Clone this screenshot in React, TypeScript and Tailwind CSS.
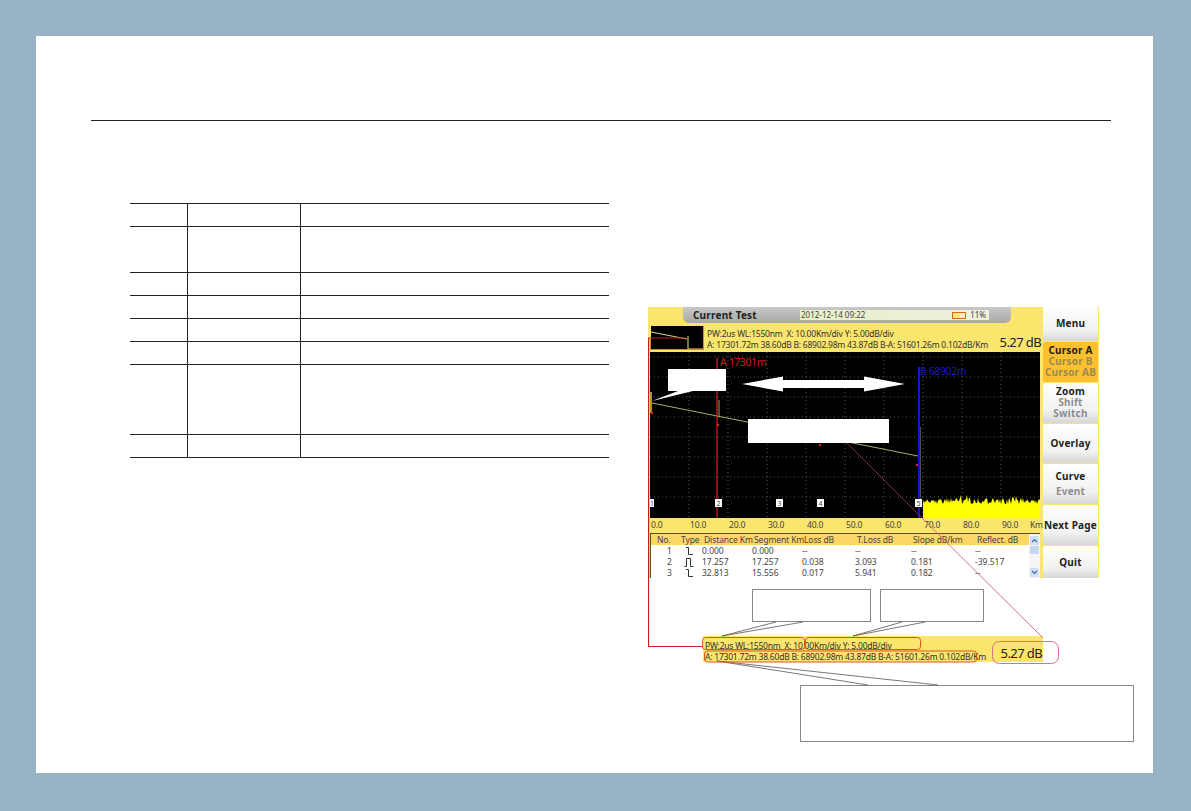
const FONT = "[font-family:'Noto_Sans','Open_Sans',sans-serif]";

const TABLE_ROWS = ['h-[23px]', 'h-[46px]', 'h-[23px]', 'h-[23px]', 'h-[23px]', 'h-[23px]', 'h-[70px]', 'h-[23px]'];

const AXIS = ['0.0', '10.0', '20.0', '30.0', '40.0', '50.0', '60.0', '70.0', '80.0', '90.0', 'Km'];

const EVENTS = [
    { no: '1', type: 'end', dist: '0.000', seg: '0.000', loss: '--', total: '--', slope: '--', refl: '--' },
    { no: '2', type: 'pulse', dist: '17.257', seg: '17.257', loss: '0.038', total: '3.093', slope: '0.181', refl: '-39.517' },
    { no: '3', type: 'end', dist: '32.813', seg: '15.556', loss: '0.017', total: '5.941', slope: '0.182', refl: '--' },
];

const MARKERS = [
    { label: '1', left: 'left-0', w: 'w-[4px]' },
    { label: '2', left: 'left-[65px]', w: 'w-[7px]' },
    { label: '3', left: 'left-[126px]', w: 'w-[7px]' },
    { label: '4', left: 'left-[167px]', w: 'w-[7px]' },
    { label: '5', left: 'left-[265px]', w: 'w-[7px]' },
];

// noise floor at the far end of the trace
function noisePath() {
    let d = 'M273 166 L273 148';
    let seed = 7;
    for (let x = 274; x <= 390; x += 1) {
        seed = (seed * 73 + 41) % 101;
        const y = 146 + (seed % 7) - (seed % 13 === 0 ? 3 : 0);
        d += ` L${x} ${y}`;
    }
    return d + ' L390 166 Z';
}

function TableGrid() {
    return (
        <div className="w-[479px] border-t border-[#222]">
            {TABLE_ROWS.map((height, i) => (
                <div
                    key={i}
                    className={`grid grid-cols-[58px_113px_1fr] border-b border-[#222] ${height}`}
                >
                    <div className="border-r border-[#222]" />
                    <div className="border-r border-[#222]" />
                    <div />
                </div>
            ))}
        </div>
    );
}

function TypeIcon({ type }: { type: string }) {
    return (
        <svg width="10" height="10" viewBox="0 0 10 10" fill="none" stroke="#333" strokeWidth="1">
            <path d={type === 'pulse' ? 'M0.5 9.5 H2.5 V1.5 H6.5 V9.5 H9.5' : 'M2 1.5 H4.5 V8.5 H9'} />
        </svg>
    );
}

function Plot() {
    const vertical = [39, 78, 117, 156, 195, 234, 273, 312, 351];
    const horizontal = [5, 25, 45, 65, 85, 105, 125, 145];
    return (
        <div className="relative ml-[2px] h-[166px] w-[390px] bg-black">
            <svg className="absolute inset-0" width="390" height="166" viewBox="0 0 390 166" fill="none">
                {vertical.map((x) => (
                    <path key={x} d={`M${x} 0 V166`} stroke="#5a5a5a" strokeDasharray="1 3" />
                ))}
                {horizontal.map((y) => (
                    <path key={y} d={`M0 ${y} H390`} stroke="#5a5a5a" strokeDasharray="1 3" />
                ))}
                <path d="M1 40 V61" stroke="#e8c820" strokeWidth="1.5" />
                <path d="M2 51 L67 64 L268 104" stroke="#d8d88a" strokeWidth="0.8" />
                <path d="M69 48 V64" stroke="#a89a70" />
                <path d="M270 75 V155" stroke="#9a9a8a" />
                <path d={noisePath()} fill="#ffff00" />
                <path d="M67 6 V166" stroke="#e02020" strokeWidth="1.2" />
                <path d="M269 15 V166" stroke="#1414c8" strokeWidth="2" />
                <circle cx="2" cy="61" r="1.2" fill="#e02020" />
                <circle cx="68" cy="73" r="1.2" fill="#e02020" />
                <circle cx="170" cy="93" r="1.2" fill="#e02020" />
                <circle cx="267" cy="113" r="1.2" fill="#e02020" />
                {/* callout tail and double arrow on top of the plot */}
                <polygon points="2,49 28,39 43,39" fill="#fff" />
                <polygon points="92,32 133,24.5 133,28 214,28 214,24.5 255,32 214,39.5 214,36 133,36 133,39.5" fill="#fff" />
            </svg>
            <span className="absolute left-[70px] top-[2px] text-[10.5px] leading-[16px] tracking-[-0.4px] text-[#d81818]">A 17301m</span>
            <span className="absolute left-[270px] top-[12px] text-[10.5px] leading-[14px] tracking-[-0.4px] text-[#1a1ac0]">B 68902m</span>
            <div className="absolute left-[18px] top-[17px] h-[22px] w-[58px] bg-white" />
            <div className="absolute left-[98px] top-[67px] h-[24px] w-[141px] bg-white" />
            {MARKERS.map((m) => (
                <span
                    key={m.label}
                    className={`absolute top-[147px] flex h-[8px] items-center justify-center overflow-hidden bg-white text-[7px] leading-none text-[#444] ${m.left} ${m.w}`}
                >
                    {m.label}
                </span>
            ))}
        </div>
    );
}

function MenuButton({ lines, className = '' }: { lines: { text: string; muted?: boolean }[]; className?: string }) {
    return (
        <div
            className={`flex flex-col items-center justify-center rounded-[2px] bg-gradient-to-b from-white via-[#f1f1f1] via-70% to-[#d6d6d6] text-[10px] font-bold leading-[11px] tracking-[0.2px] text-[#222] ${className}`}
        >
            {lines.map((line) => (
                <span key={line.text} className={line.muted ? 'text-[#8d8d8d]' : ''}>
                    {line.text}
                </span>
            ))}
        </div>
    );
}

function ScrollBar() {
    return (
        <div className="absolute bottom-0 right-0 top-0 flex w-[11px] flex-col items-center bg-[#f5f5f5] pt-[2px]">
            <span className="flex h-[9px] w-[9px] items-center justify-center rounded-[1px] bg-[#cfe0f5]">
                <svg width="7" height="5" viewBox="0 0 7 5" fill="none" stroke="#4a6a9a" strokeWidth="1.2">
                    <path d="M1 4 L3.5 1.5 L6 4" />
                </svg>
            </span>
            <span className="mt-px h-[8px] w-[9px] rounded-[1px] bg-[#c5d8f2]" />
            <span className="mt-auto mb-[1px] flex h-[9px] w-[9px] items-center justify-center rounded-[1px] bg-[#cfe0f5]">
                <svg width="7" height="5" viewBox="0 0 7 5" fill="none" stroke="#4a6a9a" strokeWidth="1.2">
                    <path d="M1 1 L3.5 3.5 L6 1" />
                </svg>
            </span>
        </div>
    );
}

function InfoLines() {
    return (
        <>
            <div className="whitespace-nowrap">PW:2us WL:1550nm&nbsp; X: 10.00Km/div Y: 5.00dB/div</div>
            <div className="whitespace-nowrap">A: 17301.72m 38.60dB B: 68902.98m 43.87dB B-A: 51601.26m 0.102dB/Km</div>
        </>
    );
}

function Screen() {
    return (
        <div className={`flex h-[271px] w-[451px] bg-[#fae56d] ${FONT}`}>
            <div className="flex w-[395px] flex-col">
                <div className="ml-[35px] flex h-[16px] w-[328px] items-center rounded-b-[6px] bg-gradient-to-b from-[#c8c8c8] to-[#a8a8a8]">
                    <span className="ml-[10px] w-[107px] text-[10px] font-bold tracking-[0.2px] text-[#222]">Current Test</span>
                    <div className="flex h-[10px] w-[189px] items-center bg-gradient-to-r from-[#e8efc8] to-[#f0f0e0] text-[8px] text-[#444]">
                        <span className="ml-px flex-1">2012-12-14 09:22</span>
                        <span className="mr-[4px] h-[7px] w-[14px] border border-[#d06a20] bg-gradient-to-r from-[#fbe67a] from-60% to-[#f5f0c0] to-60%" />
                        <span className="mr-[3px]">11%</span>
                    </div>
                </div>
                <div className="flex h-[29px] items-center">
                    <div className="ml-[3px] h-[24px] w-[53px] border-b border-r border-[#d88a20] bg-black">
                        <svg width="52" height="23" viewBox="0 0 52 23" fill="none">
                            <path d="M0 6 L36 13" stroke="#d8d88a" />
                            <path d="M37 10 V23 H52" stroke="#e6e27a" />
                        </svg>
                    </div>
                    <div className="ml-[3px] mt-[3px] flex-1 text-[8.5px] leading-[11px] tracking-[-0.22px] text-[#333]">
                        <InfoLines />
                    </div>
                    <span className="mr-[2px] mt-[9px] text-[13px] leading-none tracking-[-0.6px] text-[#222]">5.27 dB</span>
                </div>
                <Plot />
                <div className="ml-[2px] grid h-[15px] grid-cols-[repeat(9,39px)_28px_auto] items-center text-[8.5px] tracking-[-0.2px] text-[#444]">
                    {AXIS.map((label) => (
                        <span key={label} className="pl-px">{label}</span>
                    ))}
                </div>
                <div className="relative ml-[2px] h-[45px] w-[390px] border-l border-t border-[#5a5020] bg-white text-[8.5px] leading-[11px] text-[#444]">
                    <div className="flex h-[11px] bg-[#fcd766]">
                        <div className="grid w-[379px] grid-cols-[30px_21px_50px_50px_53px_56px_64px_55px] whitespace-nowrap tracking-[-0.1px]">
                            <span className="pl-[6px]">No.</span>
                            <span>Type</span>
                            <span className="pl-[2px]">Distance Km</span>
                            <span className="pl-[2px]">Segment Km</span>
                            <span className="pl-[2px]">Loss dB</span>
                            <span className="pl-[2px]">T.Loss dB</span>
                            <span className="pl-[2px]">Slope dB/km</span>
                            <span className="pl-[2px]">Reflect. dB</span>
                        </div>
                    </div>
                    {EVENTS.map((e) => (
                        <div
                            key={e.no}
                            className="grid h-[11px] grid-cols-[30px_21px_50px_50px_53px_56px_64px_55px] items-center whitespace-nowrap"
                        >
                            <span className="pl-[16px]">{e.no}</span>
                            <span className="pl-[3px]"><TypeIcon type={e.type} /></span>
                            <span>{e.dist}</span>
                            <span>{e.seg}</span>
                            <span>{e.loss}</span>
                            <span>{e.total}</span>
                            <span>{e.slope}</span>
                            <span>{e.refl}</span>
                        </div>
                    ))}
                    <ScrollBar />
                </div>
            </div>
            <div className="flex w-[55px] flex-col gap-[1px]">
                <MenuButton className="h-[34px]" lines={[{ text: 'Menu' }]} />
                <div className="flex h-[40px] flex-col items-center justify-center rounded-[2px] bg-[#fdc12f] text-[10px] font-bold leading-[11px] tracking-[0.2px] text-[#222]">
                    <span>Cursor A</span>
                    <span className="text-[#9a8a50]">Cursor B</span>
                    <span className="text-[#9a8a50]">Cursor AB</span>
                </div>
                <MenuButton className="h-[40px]" lines={[{ text: 'Zoom' }, { text: 'Shift', muted: true }, { text: 'Switch', muted: true }]} />
                <MenuButton className="h-[40px]" lines={[{ text: 'Overlay' }]} />
                <MenuButton className="h-[40px] gap-[4px]" lines={[{ text: 'Curve' }, { text: 'Event', muted: true }]} />
                <MenuButton className="h-[40px]" lines={[{ text: 'Next Page' }]} />
                <MenuButton className="h-[32px]" lines={[{ text: 'Quit' }]} />
            </div>
        </div>
    );
}

function Overlay() {
    return (
        <svg
            className="pointer-events-none absolute left-0 top-0"
            width="490"
            height="440"
            viewBox="648 307 490 440"
            fill="none"
        >
            <path d="M686 338 H648.5 V646.5 H703" stroke="#c81e1e" strokeWidth="1.2" />
            <path d="M650.5 338 V350" stroke="#d88a20" />
            <path d="M847 443 L922 518" stroke="#8f2a2a" />
            <path d="M922 518 L1043 638" stroke="#d8708a" />
            <path d="M722 636 L776 622 M722 636 L803 622" stroke="#555" strokeWidth="0.8" />
            <path d="M853 636 L902 622 M853 636 L925 622" stroke="#555" strokeWidth="0.8" />
            <path d="M717 661 L868 685 M717 661 L938 685" stroke="#555" strokeWidth="0.8" />
            <rect x="702.5" y="637.5" width="102" height="12" rx="3" stroke="#e0541e" />
            <rect x="805.5" y="637.5" width="115" height="12" rx="3" stroke="#e0541e" />
            <rect x="704.5" y="651" width="272" height="11" rx="3" stroke="#e0541e" />
            <rect x="992.5" y="641.5" width="66" height="22" rx="7" stroke="#d8708a" />
        </svg>
    );
}

export default function App() {
    return (
        <div className="h-[811px] w-full overflow-hidden bg-[#97b3c5] pl-[36px] pt-[36px]">
            <div className="h-[737px] w-[1117px] bg-white pl-[55px] pt-[84px]">
                <div className="h-px w-[1020px] bg-[#222]" />
                <div className="flex items-start">
                    <div className="ml-[39px] mt-[82px]">
                        <TableGrid />
                    </div>
                    <div className="relative ml-[39px] mt-[186px] w-[490px]">
                        <Screen />
                        <div className="ml-[104px] mt-[11px] flex gap-[9px]">
                            <div className="h-[33px] w-[119px] border border-[#888]" />
                            <div className="h-[33px] w-[104px] border border-[#888]" />
                        </div>
                        <div className={`ml-[55px] mt-[14px] flex h-[26px] w-[340px] items-center bg-[#fae56d] text-[#333] ${FONT}`}>
                            <div className="mt-[4px] flex-1 pl-[2px] text-[8.5px] leading-[11px] tracking-[-0.22px]">
                                <InfoLines />
                            </div>
                            <span className="mr-px mt-[8px] text-[13px] leading-none tracking-[-0.6px] text-[#222]">5.27 dB</span>
                        </div>
                        <div className="ml-[152px] mt-[23px] h-[57px] w-[334px] border border-[#888]" />
                        <Overlay />
                    </div>
                </div>
            </div>
        </div>
    );
}
